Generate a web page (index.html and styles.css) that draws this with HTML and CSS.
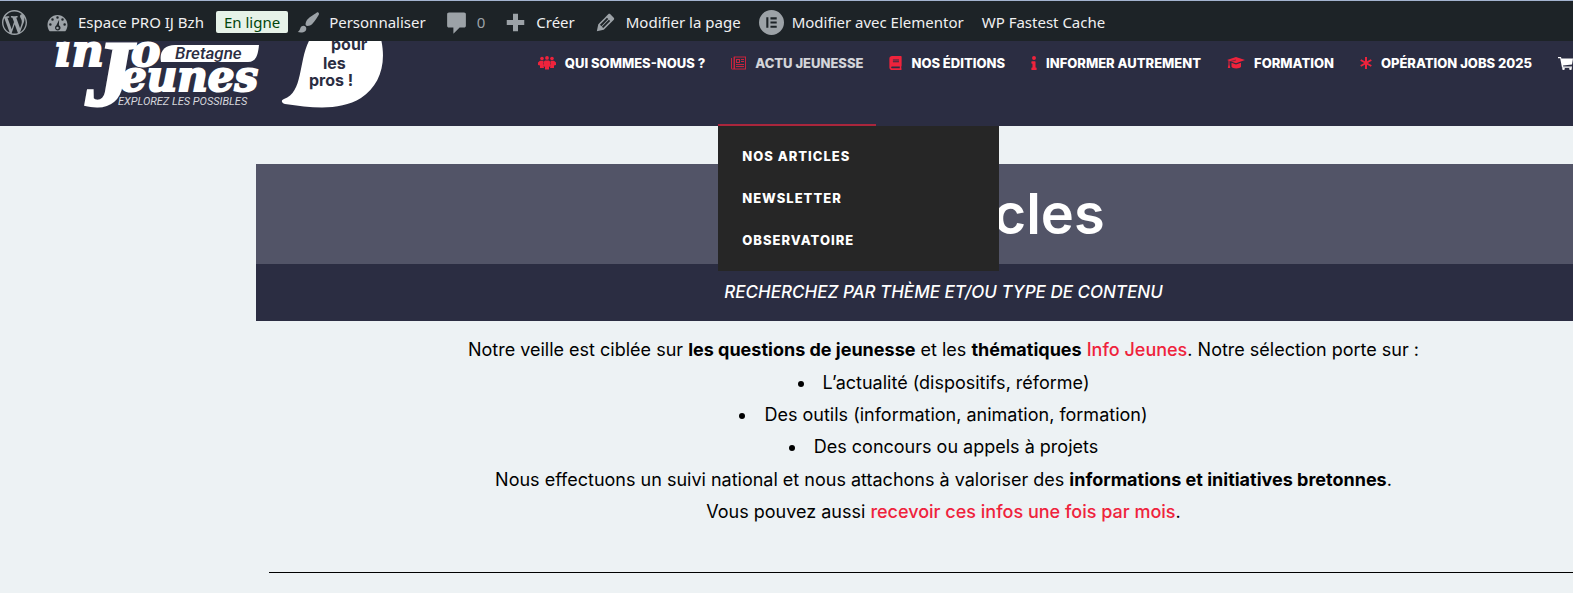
FILE: index.html
```html
<!DOCTYPE html>
<html lang="fr">
<head>
<meta charset="utf-8">
<title>Nos articles – Espace PRO IJ Bzh</title>
<link rel="stylesheet" href="styles.css">
</head>
<body>
<nav class="adminbar" aria-label="Barre d’administration">
  <a class="ab-item" href="#" aria-label="WordPress"><svg class="ab-icon ab-wp" viewBox="0 0 20 20"><path d="M20 10c0-5.51-4.49-10-10-10C4.48 0 0 4.49 0 10c0 5.52 4.48 10 10 10 5.51 0 10-4.48 10-10zM7.78 15.37L4.37 6.22c.55-.02 1.17-.08 1.17-.08.5-.06.44-1.13-.06-1.11 0 0-1.45.11-2.37.11-.18 0-.37 0-.58-.01C4.12 2.69 6.87 1.11 10 1.11c2.33 0 4.45.87 6.05 2.34-.68-.11-1.65.39-1.65 1.58 0 .74.45 1.36.9 2.1.35.61.55 1.36.55 2.46 0 1.49-1.4 5-1.4 5l-3.03-8.37c.54-.02.82-.17.82-.17.5-.05.44-1.25-.06-1.22 0 0-1.44.12-2.38.12-.87 0-2.33-.12-2.33-.12-.5-.03-.56 1.2-.06 1.22l.92.08 1.26 3.41zM17.41 10c.24-.64.74-1.87.43-4.25.7 1.29 1.05 2.71 1.05 4.25 0 3.29-1.73 6.24-4.4 7.78.97-2.59 1.94-5.2 2.92-7.78zM6.1 18.09C3.12 16.65 1.11 13.53 1.11 10c0-1.3.23-2.48.72-3.59C3.25 10.3 4.67 14.2 6.1 18.09zm4.03-6.63l2.58 6.98c-.86.29-1.76.45-2.71.45-.79 0-1.57-.11-2.29-.33.81-2.38 1.62-4.74 2.42-7.1z"/></svg></a>
  <a class="ab-item" href="#"><svg class="ab-icon" viewBox="0 0 20 20"><path fill-rule="evenodd" d="M3.76 17h12.48c1.1-1.37 1.76-3.11 1.76-5 0-4.42-3.58-8-8-8s-8 3.58-8 8c0 1.89.66 3.63 1.76 5zM10 5a1 1 0 110 2 1 1 0 010-2zM6 6.500a1 1 0 110 2 1 1 0 010-2zM14 6.500a1 1 0 110 2 1 1 0 010-2zM4.300 10.500a1 1 0 110 2 1 1 0 010-2zM15.700 10.500a1 1 0 110 2 1 1 0 010-2zM11.300 7.800l-.2 4.400a2.200 2.200 0 11-2.100.2zM10 13.300a1 1 0 100 2 1 1 0 000-2z"/></svg><span>Espace PRO IJ Bzh</span><span class="badge">En ligne</span></a>
  <a class="ab-item" href="#"><svg class="ab-icon" viewBox="0 0 20 20"><path d="M18.33 3.57s.27-.8-.31-1.36c-.53-.52-1.22-.24-1.22-.24-.61.3-5.76 3.47-7.67 5.57-.86.96-2.06 3.79-1.09 4.82.92.98 3.96-.17 4.79-1 2.06-2.06 5.21-7.17 5.5-7.79zM1.4 17.65c2.37-1.56 1.46-3.41 3.23-4.64.93-.65 2.22-.62 3.08.29.63.67.8 2.57-.16 3.46-1.57 1.45-4 1.55-6.15.89z"/></svg><span>Personnaliser</span></a>
  <a class="ab-item ab-muted" href="#"><svg class="ab-icon" viewBox="0 0 20 20"><path d="M4 2h12c1 0 1.500.6 1.500 1.500v9c0 .9-.5 1.500-1.500 1.500h-3.500l-5 5v-5H4c-1 0-1.500-.6-1.500-1.500v-9C2.500 2.600 3 2 4 2z"/></svg><span>0</span></a>
  <a class="ab-item" href="#"><svg class="ab-icon" viewBox="0 0 20 20"><path d="M8 3h4v5h5v4h-5v5H8v-5H3V8h5z"/></svg><span>Créer</span></a>
  <a class="ab-item" href="#"><svg class="ab-icon" viewBox="0 0 20 20"><path d="M13.89 3.39l2.71 2.72c.46.46.42 1.24.03 1.64l-8.01 8.02-5.56 1.16 1.16-5.58s7.6-7.63 7.99-8.03c.39-.39 1.22-.39 1.68.07zm-2.73 2.79l-5.59 5.61 1.11 1.11 5.54-5.65zm-2.97 8.23l5.58-5.6-1.07-1.08-5.59 5.6z"/></svg><span>Modifier la page</span></a>
  <a class="ab-item" href="#"><svg class="ab-icon" viewBox="0 0 24 24"><path fill-rule="evenodd" d="M12 0a12 12 0 100 24 12 12 0 000-24zM7 7h2v10H7zM11 7h6v2h-6zM11 11h6v2h-6zM11 15h6v2h-6z"/></svg><span>Modifier avec Elementor</span></a>
  <a class="ab-item" href="#"><span>WP Fastest Cache</span></a>
</nav>

<header class="site-header">
  <a class="logo" href="#" aria-label="Info Jeunes Bretagne, pour les pros !">
    <svg class="logo-art" viewBox="0 0 340 70">
      <g class="logo-script">
        <text x="1" y="25" font-size="44">in</text>
        <text x="77" y="25" font-size="44">o</text>
        <text class="logo-j" x="32" y="64" font-size="94">J</text>
        <text x="66" y="50" font-size="42">eunes</text>
      </g>
      <path fill="#fff" d="M107 21C105 11 110 4 121 4h84c-1 10-3 17-11 17z"/>
      <text class="logo-region" x="121" y="18">Bretagne</text>
      <text class="logo-tag" x="64" y="64">EXPLOREZ LES POSSIBLES</text>
      <path fill="#fff" d="M256-2h71c6 26-2 47-20 59-21 13-48 10-76 6-4-1-4-4-1-5 20-7 14-39 26-60z"/>
      <g class="logo-pros">
        <text x="277" y="9">pour</text>
        <text x="269" y="28">les</text>
        <text x="255" y="45">pros !</text>
      </g>
    </svg>
  </a>
  <nav class="menu" aria-label="Menu principal">
    <a class="menu-item" href="#"><svg class="mi w18" viewBox="0 0 18 14"><circle cx="4" cy="2.500" r="1.800"/><circle cx="9" cy="1.900" r="1.900"/><circle cx="14" cy="2.500" r="1.800"/><path d="M2 4.700h3.500L5 7.500 6 12H2V9.500L0 9V6.500zM16 4.700h-3.500l.5 2.800L12 12h4V9.500l2-.5V6.500zM7 4.500h4l1.500 1.500v4L11 11v2.500H7V11l-1.500-1V6z"/></svg>QUI SOMMES-NOUS ?</a>
    <div class="menu-item is-open">
      <a class="menu-link" href="#"><svg class="mi w15" viewBox="0 0 15 14"><path fill-rule="evenodd" d="M3 .500h12v13H1.500A1.500 1.500 0 010 12V2h1v10a.7.700 0 001.500 0V1zM4 1.500v11h10v-11zM5 3h4v4H5zM6 4v2h2V4zM10 3h3v1h-3zM10 5h3v1h-3zM5 8h8v1H5zM5 10h8v1H5z"/></svg>ACTU JEUNESSE</a>
      <div class="submenu">
        <a href="#">NOS ARTICLES</a>
        <a href="#">NEWSLETTER</a>
        <a href="#">OBSERVATOIRE</a>
      </div>
    </div>
    <a class="menu-item" href="#"><svg class="mi w13" viewBox="0 0 448 512"><path d="M448 360V24c0-13.300-10.700-24-24-24H96C43 0 0 43 0 96v320c0 53 43 96 96 96h328c13.300 0 24-10.700 24-24v-16c0-7.500-3.500-14.300-8.900-18.700-4.200-15.400-4.200-59.300 0-74.700 5.400-4.300 8.900-11.100 8.900-18.600zM128 134c0-3.300 2.700-6 6-6h212c3.300 0 6 2.700 6 6v20c0 3.300-2.700 6-6 6H134c-3.300 0-6-2.700-6-6v-20zm0 64c0-3.300 2.700-6 6-6h212c3.300 0 6 2.700 6 6v20c0 3.300-2.700 6-6 6H134c-3.300 0-6-2.700-6-6v-20zm253.400 250H96c-17.700 0-32-14.300-32-32 0-17.600 14.400-32 32-32h285.400c-1.900 17.100-1.900 46.900 0 64z"/></svg>NOS ÉDITIONS</a>
    <a class="menu-item" href="#"><svg class="mi w6" viewBox="0 0 192 512"><path d="M20 424h20V280H20c-11 0-20-9-20-20v-48c0-11 9-20 20-20h112c11 0 20 9 20 20v212h20c11 0 20 9 20 20v48c0 11-9 20-20 20H20c-11 0-20-9-20-20v-48c0-11 9-20 20-20zM96 0a72 72 0 100 144A72 72 0 0096 0z"/></svg>INFORMER AUTREMENT</a>
    <a class="menu-item" href="#"><svg class="mi w18" viewBox="0 0 18 14"><path d="M9 1l9 3-9 3.200L2.500 5v3.500l.8 3.500H.8l.7-3.500V4.600L0 4zM4.500 6.800L9 8.500l5-1.700v4c-1 2.200-8.500 2.200-9.500 0z"/><path fill="none" stroke="#2b2d42" stroke-width=".6" d="M9 4L3.500 5.500"/></svg>FORMATION</a>
    <a class="menu-item" href="#"><svg class="mi w12" viewBox="0 0 12 14"><path fill="none" stroke="#ef233c" stroke-width="2" d="M6 1v12M.700 4l10.600 6M11.300 4L.700 10"/></svg>OPÉRATION JOBS 2025</a>
    <a class="menu-item" href="#" aria-label="Panier"><svg class="mi w15 cart" viewBox="0 0 15 14"><path d="M0 1h3l.4 1.500H15L14 8.500 5 9.500l.2 1H14v1.200H4L2.200 2.200H0z"/><circle cx="5.500" cy="12.700" r="1.300"/><circle cx="12.500" cy="12.700" r="1.300"/></svg></a>
  </nav>
</header>

<main class="content">
  <h1 class="title">Nos articles</h1>
  <p class="subtitle">RECHERCHEZ PAR THÈME ET/OU TYPE DE CONTENU</p>
  <div class="intro">
    <p>Notre veille est ciblée sur <strong>les questions de jeunesse</strong> et les <strong>thématiques</strong> <a href="#">Info Jeunes</a>. Notre sélection porte sur :</p>
    <ul>
      <li>L’actualité (dispositifs, réforme)</li>
      <li>Des outils (information, animation, formation)</li>
      <li>Des concours ou appels à projets</li>
    </ul>
    <p>Nous effectuons un suivi national et nous attachons à valoriser des <strong>informations et initiatives bretonnes</strong>.</p>
    <p>Vous pouvez aussi <a href="#">recevoir ces infos une fois par mois</a>.</p>
  </div>
  <hr class="rule">
</main>
</body>
</html>
```
FILE: styles.css
```css
* { box-sizing: border-box; }

body {
  margin: 0;
  min-height: 100vh;
  background: #edf2f4;
  color: #000;
  font-family: Inter, "Open Sans", sans-serif;
  overflow: hidden;
}

a { color: inherit; text-decoration: none; }
svg { display: block; flex: none; overflow: visible; }

.adminbar {
  display: flex;
  align-items: center;
  gap: 18px;
  height: 41px;
  padding: 2px 0 0 2px;
  border-top: 1px solid #a3b3cf;
  background: #1d2327;
  color: #f0f0f1;
  font: 15px/20px "Noto Sans", sans-serif;
  white-space: nowrap;
}
.ab-item { display: flex; align-items: center; gap: 8px; }
.ab-icon { width: 25px; height: 25px; fill: #9ca2a7; }
.ab-muted { color: #9ca2a7; }
.badge {
  margin: 0 -10px 0 4px;
  padding: 1px 8px;
  border-radius: 2px;
  background: #e6f2e8;
  color: #00450c;
}

.site-header {
  display: flex;
  justify-content: space-between;
  height: 85px;
  background: #2b2d42;
}
.logo { flex: none; padding-left: 54px; overflow: hidden; }
.logo-art { width: 340px; height: 70px; }
.logo-script { fill: #fff; stroke: #fff; stroke-width: 2px; font-family: "DejaVu Serif", serif; font-style: italic; font-weight: 700; }
.logo-j { stroke-width: 3px; font-family: "Liberation Serif", serif; }
.logo-region { fill: #2b2d42; font: italic 500 17px Roboto, sans-serif; }
.logo-tag { fill: #d5d6dc; font: italic 11px Roboto, sans-serif; }
.logo-pros { fill: #2b2d42; font: 700 16px Inter, sans-serif; }

.menu {
  display: flex;
  flex: none;
  margin-right: -13px;
  color: #fff;
  font-size: 13px;
  font-weight: 800;
  line-height: 20px;
  white-space: nowrap;
}
.menu-item {
  position: relative;
  display: flex;
  align-items: flex-start;
  gap: 9px;
  padding: 12px 13px 0;
}
.menu-link { display: flex; gap: 9px; opacity: 0.8; }
.is-open { border-bottom: 2px solid #a9263c; }
.mi { height: 14px; margin-top: 3px; fill: #ef233c; }
.mi.cart { fill: #fff; }
.w6 { width: 6px; }
.w12 { width: 12px; }
.w13 { width: 13px; }
.w15 { width: 15px; }
.w18 { width: 18px; }

.submenu {
  position: absolute;
  top: 100%;
  left: 0;
  z-index: 2;
  display: grid;
  gap: 22px;
  width: 281px;
  margin-top: 2px;
  padding: 20px 24px 21px;
  background: #262626;
  letter-spacing: 1px;
}

.content { margin: 38px -58px 0 256px; text-align: center; }
.title {
  margin: 0;
  background: #525467;
  color: #fff;
  font-size: 56px;
  font-weight: 600;
  line-height: 100px;
}
.subtitle {
  margin: 0;
  background: #2b2d42;
  color: #fff;
  font-size: 17px;
  font-style: italic;
  font-weight: 500;
  line-height: 57px;
}
.intro { padding: 13px 0 44px; font-size: 18px; line-height: 32px; }
.intro p { margin: 0; }
.intro ul { margin: 1px 0; padding: 0; list-style-position: inside; }
.intro a { color: #ef233c; font-weight: 500; }
.rule { margin: 0 0 0 13px; border: 0; border-top: 1px solid #000; }
```
